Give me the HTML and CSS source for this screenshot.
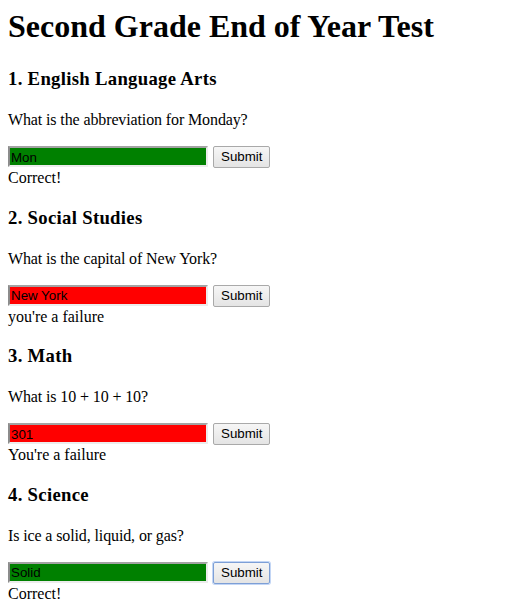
FILE: index.html
```html
<!DOCTYPE html>
<html>
<head>
<meta charset="utf-8">
<title>Second Grade End of Year Test</title>
<link rel="stylesheet" href="styles.css">
</head>
<body>
<h1 class="title">Second Grade End of Year Test</h1>

<section class="question">
  <h3 class="subject">1. English Language Arts</h3>
  <p class="prompt">What is the abbreviation for Monday?</p>
  <div class="row"><input class="answer correct" type="text" value="Mon"><button class="submit">Submit</button></div>
  <div class="result">Correct!</div>
</section>

<section class="question">
  <h3 class="subject">2. Social Studies</h3>
  <p class="prompt">What is the capital of New York?</p>
  <div class="row"><input class="answer wrong" type="text" value="New York"><button class="submit">Submit</button></div>
  <div class="result">you're a failure</div>
</section>

<section class="question">
  <h3 class="subject">3. Math</h3>
  <p class="prompt">What is 10 + 10 + 10?</p>
  <div class="row"><input class="answer wrong" type="text" value="301"><button class="submit">Submit</button></div>
  <div class="result">You're a failure</div>
</section>

<section class="question">
  <h3 class="subject">4. Science</h3>
  <p class="prompt">Is ice a solid, liquid, or gas?</p>
  <div class="row"><input class="answer correct" type="text" value="Solid"><button class="submit focused">Submit</button></div>
  <div class="result">Correct!</div>
</section>
</body>
</html>
```
FILE: styles.css
```css
body {
  margin: 8px;
  font-family: "Liberation Serif", "Times New Roman", serif;
  font-size: 16px;
  color: #000;
  background: #fff;
}
.title {
  font-size: 32px;
  line-height: 37px;
  margin: 0 0 23px;
}
.question { display: block; }
.subject {
  font-size: 18.72px;
  line-height: 22px;
  letter-spacing: 0.3px;
  margin: 19.5px 0 21px;
}
.question:first-of-type .subject { margin-top: 0; }
.prompt {
  line-height: 18px;
  letter-spacing: -0.12px;
  margin: 0 0 17px;
}
.row {
  display: flex;
  align-items: flex-start;
  gap: 5px;
  height: 23px;
}
.answer {
  font-family: "Liberation Sans", Arial, sans-serif;
  font-size: 13.33px;
  line-height: 16px;
  width: 200px;
  height: 21px;
  box-sizing: border-box;
  border: 2px solid #a3a3a3;
  border-right-color: #ececec;
  border-bottom-color: #ececec;
  border-left-color: #8c8c8c;
  padding: 1px 1px 0;
  margin: 0;
  color: #000;
  outline: none;
}
.correct { background: #008000; }
.wrong { background: #ff0000; }
.submit {
  font-family: "Liberation Sans", Arial, sans-serif;
  font-size: 13.33px;
  line-height: 16px;
  height: 22px;
  box-sizing: border-box;
  padding: 2px 7px 2px 7px;
  margin: 0;
  background: linear-gradient(#f6f6f6, #e4e4e4);
  border: 1px solid #a9a9a9;
  border-radius: 2px;
  color: #000;
}
.submit.focused {
  border-color: #7d9fd6;
  box-shadow: 0 0 0 1px #c3d6f5;
}
.result { line-height: 18px; }
```
